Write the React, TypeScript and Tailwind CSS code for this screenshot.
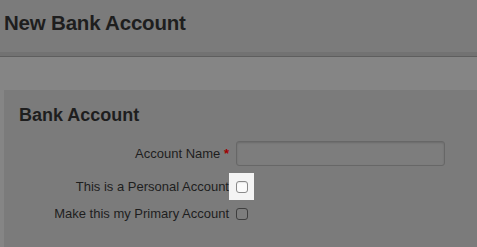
export default function App() {
  return (
    <div className="w-[477px] h-[247px] overflow-hidden bg-[#858585] font-['Liberation_Sans',Arial,sans-serif] text-[#1e1e1e]">
      {/* Header */}
      <div className="h-[52px] bg-[#7b7b7b] px-[4px] pt-[11px]">
        <h1 className="text-[20.5px] font-bold leading-[24px] tracking-[-0.2px]">New Bank Account</h1>
      </div>
      <div className="h-[4px] bg-[#727272]" />
      <div className="h-[1px] bg-[#5e5e5e]" />

      {/* Page body */}
      <div className="pt-[33px] pl-[4px]">
        <div className="bg-[#7b7b7b] h-[200px] pl-[15px] pt-[15px]">
          <h2 className="text-[18px] font-bold leading-[21px]">Bank Account</h2>

          <div className="mt-[15px] flex flex-col">
            <div className="flex items-center h-[25px]">
              <label className="w-[210px] text-right text-[13px] leading-[16px]">
                Account Name <span className="text-[#a00000] font-bold">*</span>
              </label>
              <input
                type="text"
                className="ml-[7px] w-[209px] h-[25px] rounded-[3px] border border-[#676767] bg-[#7d7d7d] shadow-[inset_0_1px_2px_rgba(0,0,0,0.15)] outline-none"
              />
            </div>

            <div className="flex items-center h-[27px] mt-[7px]">
              <label className="w-[210px] text-right text-[13px] leading-[16px]">This is a Personal Account</label>
              <div className="w-[25px] h-[27px] bg-[#f4f4f4] flex items-center justify-center">
                <span className="block w-[12px] h-[12px] rounded-[3px] border border-[#8a8a8a] bg-[#fbfbfb] shadow-[inset_0_1px_1px_rgba(0,0,0,0.08)]" />
              </div>
            </div>

            <div className="flex items-center h-[20px] mt-[4px]">
              <label className="w-[210px] text-right text-[13px] leading-[16px]">Make this my Primary Account</label>
              <div className="w-[25px] flex items-center justify-center">
                <span className="block w-[12px] h-[12px] rounded-[3px] border border-[#3e3e3e] bg-[#7d7d7d]" />
              </div>
            </div>
          </div>
        </div>
      </div>
    </div>
  );
}
